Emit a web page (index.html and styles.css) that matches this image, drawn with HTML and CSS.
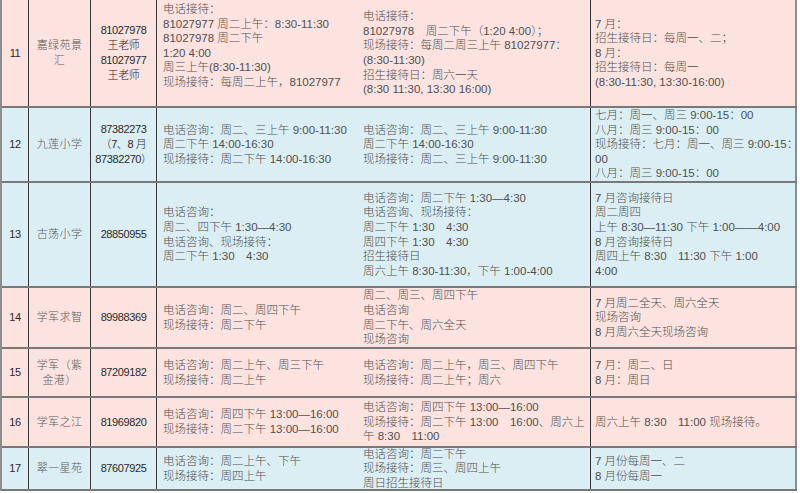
FILE: index.html
```html
<!DOCTYPE html>
<html lang="zh">
<head>
<meta charset="utf-8">
<title>招生咨询时间表</title>
<link rel="stylesheet" href="styles.css">
</head>
<body>
<div class="sheet">
  <div class="row pink r11">
    <div class="cell num"><div>11</div></div>
    <div class="cell name"><div>嘉绿苑景<br>汇</div></div>
    <div class="cell tel"><div>81027978<br>王老师<br>81027977<br>王老师</div></div>
    <div class="cell info top"><div>电话接待：<br>81027977 周二上午：8:30-11:30<br>81027978 周二下午<br>1:20 4:00<br>周三上午(8:30-11:30)<br>现场接待：每周二上午，81027977</div></div>
    <div class="cell info wide"><div>电话接待：<br>81027978　周二下午（1:20 4:00）；<br>现场接待：每周二周三上午 81027977：<br>(8:30-11:30)<br>招生接待日：周六一天<br>(8:30 11:30, 13:30 16:00)</div></div>
    <div class="cell info last"><div>7 月：<br>招生接待日：每周一、二；<br>8 月：<br>招生接待日：每周一<br>(8:30-11:30, 13:30-16:00)</div></div>
  </div>
  <div class="row blue r12">
    <div class="cell num"><div>12</div></div>
    <div class="cell name"><div>九莲小学</div></div>
    <div class="cell tel"><div>87382273<br>（7、8 月<br>87382270）</div></div>
    <div class="cell info"><div>电话咨询：周二、三上午 9:00-11:30<br>周二下午 14:00-16:30<br>现场接待：周二下午 14:00-16:30</div></div>
    <div class="cell info wide"><div>电话咨询：周二、三上午 9:00-11:30<br>周二下午 14:00-16:30<br>现场接待：周二、三上午 9:00-11:30</div></div>
    <div class="cell info last"><div>七月：周一、周三 9:00-15：00<br>八月：周三 9:00-15：00<br>现场接待：七月：周一、周三 9:00-15：<br>00<br>八月：周三 9:00-15：00</div></div>
  </div>
  <div class="row blue r13">
    <div class="cell num"><div>13</div></div>
    <div class="cell name"><div>古荡小学</div></div>
    <div class="cell tel"><div>28850955</div></div>
    <div class="cell info"><div>电话咨询：<br>周二、四下午 1:30—4:30<br>电话咨询、现场接待：<br>周二下午 1:30　4:30</div></div>
    <div class="cell info wide"><div>电话咨询：周二下午 1:30—4:30<br>电话咨询、现场接待：<br>周二下午 1:30　4:30<br>周四下午 1:30　4:30<br>招生接待日<br>周六上午 8:30-11:30，下午 1:00-4:00</div></div>
    <div class="cell info last"><div>7 月咨询接待日<br>周二周四<br>上午 8:30—11:30 下午 1:00——4:00<br>8 月咨询接待日<br>周四上午 8:30　11:30 下午 1:00<br>4:00</div></div>
  </div>
  <div class="row pink r14">
    <div class="cell num"><div>14</div></div>
    <div class="cell name"><div>学军求智</div></div>
    <div class="cell tel"><div>89988369</div></div>
    <div class="cell info"><div>电话咨询：周二、周四下午<br>现场接待：周二下午</div></div>
    <div class="cell info wide"><div>周二、周三、周四下午<br>电话咨询<br>周二下午、周六全天<br>现场咨询</div></div>
    <div class="cell info last"><div>7 月周二全天、周六全天<br>现场咨询<br>8 月周六全天现场咨询</div></div>
  </div>
  <div class="row pink r15">
    <div class="cell num"><div>15</div></div>
    <div class="cell name"><div>学军（紫<br>金港）</div></div>
    <div class="cell tel"><div>87209182</div></div>
    <div class="cell info"><div>电话咨询：周二上午、周三下午<br>现场接待：周二上午</div></div>
    <div class="cell info wide"><div>电话咨询：周二上午，周三、周四下午<br>现场接待：周二上午；周六</div></div>
    <div class="cell info last"><div>7 月：周二、日<br>8 月：周日</div></div>
  </div>
  <div class="row pink r16">
    <div class="cell num"><div>16</div></div>
    <div class="cell name"><div>学军之江</div></div>
    <div class="cell tel"><div>81969820</div></div>
    <div class="cell info"><div>电话咨询：周四下午 13:00—16:00<br>现场接待：周二下午 13:00—16:00</div></div>
    <div class="cell info wide"><div>电话咨询：周四下午 13:00—16:00<br>现场接待：周二下午 13:00　16:00、周六上<br>午 8:30　11:00</div></div>
    <div class="cell info last"><div>周六上午 8:30　11:00 现场接待。</div></div>
  </div>
  <div class="row blue r17">
    <div class="cell num"><div>17</div></div>
    <div class="cell name"><div>翠一星苑</div></div>
    <div class="cell tel"><div>87607925</div></div>
    <div class="cell info"><div>电话咨询：周二上午、下午<br>现场接待：周四上午</div></div>
    <div class="cell info wide"><div>电话咨询：周二下午<br>现场接待：周三、周四上午<br>周日招生接待日</div></div>
    <div class="cell info last"><div>7 月份每周一、二<br>8 月份每周一</div></div>
  </div>
</div>
</body>
</html>
```
FILE: styles.css
```css
html, body {
  margin: 0;
  padding: 0;
  background: #ffffff;
}
body {
  font-family: "Liberation Sans", "Noto Sans CJK SC", sans-serif;
  font-size: 11.5px;
  line-height: 14.6px;
  color: #4f4f4f;
}
.sheet {
  width: 797px;
  box-sizing: border-box;
  border-left: 2px solid #8c8c8c;
  display: flex;
  flex-direction: column;
}
.row {
  display: grid;
  grid-template-columns: 27px 62px 66px 200px 234px 206px;
  box-sizing: border-box;
  border-bottom: 2px solid #787878;
}
.pink { background: #fce3e0; }
.blue { background: #dbeef3; }
.r11 { height: 108px; }
.r12 { height: 75px; }
.r13 { height: 105px; }
.r14 { height: 61px; }
.r15 { height: 49px; }
.r16 { height: 50px; }
.r17 { height: 43px; }
.cell {
  display: flex;
  align-items: center;
  box-sizing: border-box;
  border-right: 1px solid #353535;
  white-space: nowrap;
  overflow: hidden;
}
.num, .name, .tel {
  justify-content: center;
  text-align: center;
}
.num, .tel {
  font-size: 11px;
  line-height: 14.8px;
  letter-spacing: -0.4px;
  color: #2a2a2a;
  font-weight: 300;
}
.name {
  font-size: 11px;
  letter-spacing: 0.4px;
  color: #5a5a5a;
  font-weight: 300;
}
.info {
  padding-left: 6px;
  font-weight: 300;
}
.info:nth-child(4) {
  border-right: none;
}
.wide {
  padding-left: 6px;
}
.last {
  padding-left: 4px;
  border-right: 2px solid #8c8c8c;
}
.top {
  align-items: flex-start;
  padding-top: 2px;
}
```
